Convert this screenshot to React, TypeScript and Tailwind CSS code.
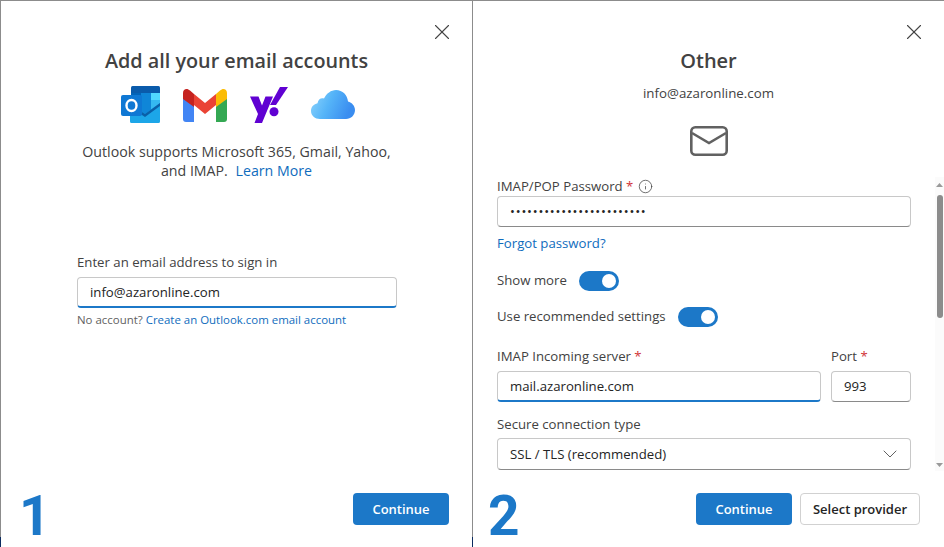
import { ChevronDown, Info, X } from "lucide-react";

const font = "font-['Open_Sans','Noto_Sans',sans-serif]";

const OutlookIcon = () => (
  <svg width="40" height="37" viewBox="0 0 40 37">
    <path d="M10 1.5a1.5 1.5 0 0 1 1.5-1.5h26a1.5 1.5 0 0 1 1.5 1.5V7H10z" fill="#0a5bab" />
    <rect x="10" y="7" width="10" height="7" fill="#0364b8" />
    <rect x="20" y="7" width="10" height="7" fill="#0f86d8" />
    <rect x="30" y="7" width="9" height="7" fill="#50d9ff" />
    <rect x="10" y="14" width="10" height="14" fill="#0f78d4" />
    <rect x="20" y="14" width="10" height="14" fill="#0f86d8" />
    <rect x="30" y="14" width="9" height="14" fill="#35b8f1" />
    <path d="M9 17l15 11 15-11v18.500a1.500 1.500 0 0 1-1.500 1.500h-27A1.500 1.500 0 0 1 9 35.500z" fill="#1ca6e8" />
    <path d="M9 18l15 10 15-11v3L24 31 9 21z" fill="#0a5fa8" />
    <rect x="0" y="9" width="21" height="21" rx="2" fill="#0f78d4" />
    <ellipse cx="10.500" cy="19.500" rx="5" ry="5.500" fill="none" stroke="#fff" strokeWidth="2.400" />
  </svg>
);

const GmailIcon = () => (
  <svg width="44" height="34" viewBox="0 0 44 34">
    <path d="M0 8v23a3 3 0 0 0 3 3h8V15z" fill="#4285f4" />
    <path d="M33 15v19h8a3 3 0 0 0 3-3V8z" fill="#34a853" />
    <path d="M11 6v11l11 9 11-9V6L22 15z" fill="#ea4335" />
    <path d="M0 5v6l11 8V6L7 2.500C4-0.500 0 1 0 5z" fill="#c5221f" />
    <path d="M33 6v13l11-8V5c0-4-4-5.500-7-2.500z" fill="#fbbc04" />
  </svg>
);

const YahooIcon = () => (
  <svg width="38" height="36" viewBox="0 0 38 36">
    <path d="M0 9.500h8.500l3.500 9 3.500-9H23L12 36H4.500l3.500-9z" fill="#6001d2" />
    <circle cx="24" cy="24.700" r="4.500" fill="#6001d2" />
    <path d="M30 0h8L26 18h-6z" fill="#6001d2" />
  </svg>
);

const CloudIcon = () => (
  <svg width="44" height="29" viewBox="0 0 44 29">
    <defs>
      <linearGradient id="cloud" x1="0" y1="0" x2="1" y2="0.300">
        <stop offset="0" stopColor="#8fd6fd" />
        <stop offset="0.500" stopColor="#55b4f8" />
        <stop offset="1" stopColor="#3a8df0" />
      </linearGradient>
    </defs>
    <path
      d="M9 29C4 29 0 25.500 0 21s3-7 6.500-7.800C7 9.500 10 7.500 13 8.500 15.500 3.500 20 0 25 0c6.500 0 11.500 5 12 11.500 4 1 7 4.500 7 8.500 0 5-4 9-9 9z"
      fill="url(#cloud)"
    />
  </svg>
);

const Envelope = () => (
  <svg width="38" height="30" viewBox="0 0 38 30" fill="none" stroke="#616161" strokeWidth="2.600">
    <rect x="1.300" y="1.300" width="35.400" height="27.400" rx="4" />
    <path d="M2 7l17 10 17-10" />
  </svg>
);

const Toggle = () => (
  <span className="flex h-5 w-10 items-center justify-end rounded-full bg-[#1c78c8] pr-[3px]">
    <span className="h-3.5 w-3.5 rounded-full bg-white" />
  </span>
);

const Req = () => <span className="text-[#d13438]"> *</span>;

const Field = ({
  value,
  focused,
  className,
}: {
  value: string;
  focused?: boolean;
  className?: string;
}) => (
  <div
    className={`flex h-[31px] items-center rounded border border-[#c8c8c8] bg-white pt-[1px] pl-3 text-[13.200px] text-[#242424] ${
      focused ? "border-b-2 border-b-[#1c78c8]" : "border-b-[#8a8a8a]"
    } ${className ?? ""}`}
  >
    {value}
  </div>
);

const CloseRow = () => (
  <div className="flex h-[60px] justify-end pt-[18px] pr-[17px]">
    <X size={26} strokeWidth={1} className="text-[#444]" />
  </div>
);

const Continue = () => (
  <button className="h-8 w-24 rounded bg-[#1c78c8] pt-[1px] text-[13px] font-semibold text-white">
    Continue
  </button>
);

const BigNumber = ({ n }: { n: string }) => (
  <span className="pt-[3px] font-['Roboto',sans-serif] text-[55px] leading-[40px] font-bold text-[#1c78c8]">
    {n}
  </span>
);

export default function App() {
  return (
    <div className={`flex h-[547px] w-[944px] overflow-hidden border-t border-[#8c8c8c] bg-white ${font}`}>
      {/* first dialog */}
      <div className="relative flex w-[473px] flex-col border-x border-[#8c8c8c]">
        {/* dark window edge showing behind the dialog */}
        <span className="absolute bottom-0 -left-px h-[10px] w-px bg-[#0b2a5e]" />
        <span className="absolute -right-px bottom-0 h-[10px] w-px bg-[#0b2a5e]" />
        <CloseRow />
        <div className="flex flex-1 flex-col">
          <h1 className="-mt-[14px] text-center text-[19.800px] leading-[27px] font-semibold text-[#424242]">
            Add all your email accounts
          </h1>
          <div className="mt-[12px] flex h-[37px] items-center pl-[120px]">
            <OutlookIcon />
            <span className="ml-[22px]"><GmailIcon /></span>
            <span className="ml-[23px]"><YahooIcon /></span>
            <span className="ml-[23px]"><CloudIcon /></span>
          </div>
          <p className="mt-[19px] text-center text-[14.200px] leading-[19px] text-[#424242]">
            Outlook supports Microsoft 365, Gmail, Yahoo,
            <br />
            and IMAP. <span className="ml-1 text-[#0f6cbd]">Learn More</span>
          </p>
          <div className="mt-[73px] pr-[75px] pl-[76px]">
            <label className="block text-[13.200px] leading-[18px] text-[#424242]">
              Enter an email address to sign in
            </label>
            <Field value="info@azaronline.com" focused className="mt-[6px] h-8 pt-[2px]" />
            <p className="mt-[4px] text-[11.450px] leading-[16px] text-[#616161]">
              No account? <span className="text-[#0f6cbd]">Create an Outlook.com email account</span>
            </p>
          </div>
        </div>
        <div className="flex h-[54px] items-start justify-between pr-[23px] pl-[18px]">
          <BigNumber n="1" />
          <Continue />
        </div>
      </div>

      {/* second dialog */}
      <div className="flex w-[471px] flex-col">
        <CloseRow />
        <h1 className="-mt-[14px] text-center text-[20px] leading-[27px] font-semibold text-[#424242]">
          Other
        </h1>
        <p className="mt-[10px] text-center text-[13.300px] leading-[18px] text-[#424242]">
          info@azaronline.com
        </p>
        <div className="mt-[24px] flex justify-center">
          <Envelope />
        </div>
        <div className="mt-[21px] flex h-[294px] overflow-hidden">
          <div className="flex-1 pr-[24px] pl-[24px]">
            <div className="flex items-center text-[13.200px] leading-[18px] text-[#424242]">
              <span>IMAP/POP Password<Req /></span>
              <Info size={15} strokeWidth={1.2} className="ml-[5px]" />
            </div>
            <div className="mt-[1px] flex h-[31px] items-center rounded border border-[#c8c8c8] border-b-[#8a8a8a] pl-3 text-[13px] tracking-[0.8px] text-[#242424]">
              ••••••••••••••••••••••••
            </div>
            <p className="mt-[7px] text-[13.200px] leading-[18px] text-[#0f6cbd]">Forgot password?</p>
            <div className="mt-[19px] flex items-center gap-3 text-[13.200px] text-[#424242]">
              Show more <Toggle />
            </div>
            <div className="mt-[16px] flex items-center gap-3 text-[13.200px] text-[#424242]">
              Use recommended settings <Toggle />
            </div>
            <div className="mt-[20px] flex gap-[10px]">
              <div className="flex-1">
                <label className="block text-[13.200px] leading-[18px] text-[#424242]">
                  IMAP Incoming server<Req />
                </label>
                <Field value="mail.azaronline.com" focused className="mt-[6px] h-8" />
              </div>
              <div className="w-20">
                <label className="block text-[13.200px] leading-[18px] text-[#424242]">
                  Port<Req />
                </label>
                <Field value="993" className="mt-[6px] h-8" />
              </div>
            </div>
            <label className="mt-[13px] block text-[13.200px] leading-[18px] text-[#424242]">
              Secure connection type
            </label>
            <div className="mt-[5px] flex h-8 items-center justify-between rounded border border-[#c8c8c8] border-b-[#8a8a8a] pr-[8px] pl-3 text-[13.200px] text-[#242424]">
              <span className="pt-[1px]">SSL / TLS (recommended)</span>
              <ChevronDown size={24} strokeWidth={1} className="text-[#616161]" />
            </div>
          </div>
          {/* scrollbar */}
          <div className="flex w-[9px] flex-col items-center bg-[#fbfbfb] pt-[6px]">
            <svg width="7" height="4" viewBox="0 0 7 4"><path d="M3.500 0L7 4H0z" fill="#9a9a9a" /></svg>
            <div className="mt-[8px] h-[123px] w-[6px] rounded-full bg-[#8c8c8c]" />
            <div className="flex-1" />
            <svg width="7" height="4" viewBox="0 0 7 4" className="mb-[4px]"><path d="M0 0h7L3.500 4z" fill="#9a9a9a" /></svg>
          </div>
        </div>
        <div className="mt-auto flex h-[54px] items-start pr-[24px] pl-[15px]">
          <BigNumber n="2" />
          <div className="ml-auto flex gap-2">
            <Continue />
            <button className="h-8 w-[120px] rounded border border-[#d1d1d1] bg-white pt-[1px] text-[13px] font-semibold text-[#242424]">
              Select provider
            </button>
          </div>
        </div>
      </div>
    </div>
  );
}
